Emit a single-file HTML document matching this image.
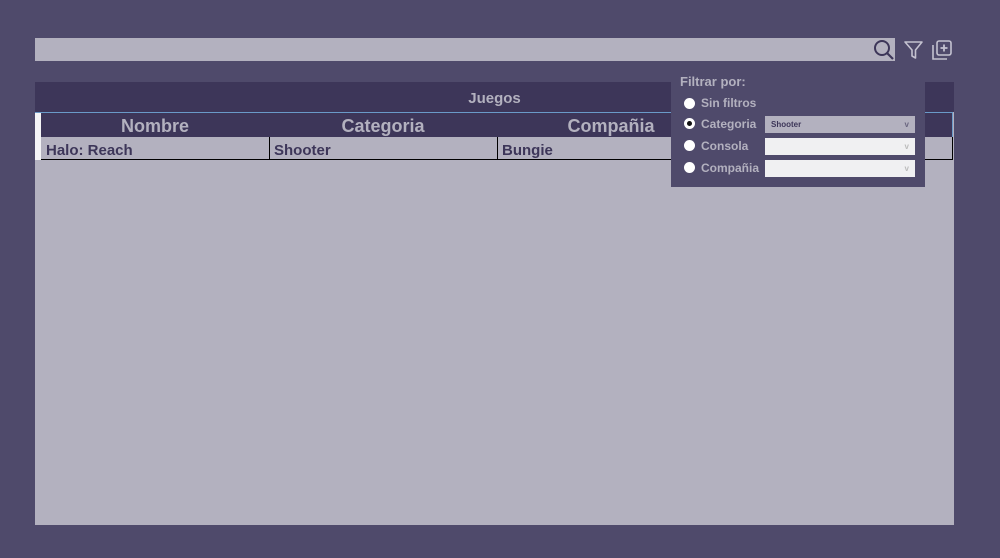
<!DOCTYPE html>
<html><head><meta charset="utf-8"><style>
*{margin:0;padding:0;box-sizing:border-box}
body{width:1000px;height:558px;background:#4f4a6b;position:relative;overflow:hidden;font-family:"Liberation Sans",sans-serif;font-weight:bold}
.abs{position:absolute}
</style></head><body>
<div class="abs" style="left:35px;top:38px;width:860px;height:23px;background:#b3b1bf"></div>
<svg class="abs" style="left:872px;top:39px" width="24" height="22" viewBox="0 0 24 22"><circle cx="10" cy="9" r="7" fill="none" stroke="#3d3659" stroke-width="2"/><line x1="15" y1="14" x2="21" y2="20" stroke="#3d3659" stroke-width="2.2"/></svg>
<svg class="abs" style="left:903px;top:40px" width="22" height="20" viewBox="0 0 22 20"><path d="M2 2 H19 L12.5 10 V18 L9 16 V10 Z" fill="none" stroke="#c4c2d0" stroke-width="1.6" stroke-linejoin="round"/></svg>
<svg class="abs" style="left:931px;top:39px" width="22" height="22" viewBox="0 0 22 22"><rect x="6" y="2" width="14" height="14" rx="2" fill="none" stroke="#c4c2d0" stroke-width="1.6"/><path d="M2 6 V20 H16" fill="none" stroke="#c4c2d0" stroke-width="1.6"/><path d="M13 5.5 V12.5 M9.5 9 H16.5" stroke="#c4c2d0" stroke-width="1.8"/></svg>

<div class="abs" style="left:35px;top:82px;width:919px;height:443px;background:#b3b1bf"></div>
<div class="abs" style="left:35px;top:82px;width:919px;height:30px;background:#3d3659;color:#b3b1bf;font-size:15px;text-align:center;line-height:34px">Juegos</div>
<div class="abs" style="left:35px;top:112px;width:918px;height:1px;background:#6a9ac8"></div>
<div class="abs" style="left:952px;top:112px;width:1px;height:26px;background:#6a9ac8"></div>
<div class="abs" style="left:35px;top:113px;width:917px;height:24px;background:#3d3659"></div>
<div class="abs" style="left:35px;top:113px;width:6px;height:47px;background:#f4f4f6"></div>
<div class="abs" style="left:41px;top:113px;width:228px;height:24px;color:#b3b1bf;font-size:18px;text-align:center;line-height:26px">Nombre</div>
<div class="abs" style="left:269px;top:113px;width:228px;height:24px;color:#b3b1bf;font-size:18px;text-align:center;line-height:26px">Categoria</div>
<div class="abs" style="left:497px;top:113px;width:228px;height:24px;color:#b3b1bf;font-size:18px;text-align:center;line-height:26px">Compañia</div>
<div class="abs" style="left:41px;top:159px;width:912px;height:1px;background:#000"></div>
<div class="abs" style="left:269px;top:137px;width:1px;height:23px;background:#000"></div>
<div class="abs" style="left:497px;top:137px;width:1px;height:23px;background:#000"></div>
<div class="abs" style="left:952px;top:137px;width:1px;height:23px;background:#000"></div>
<div class="abs" style="left:46px;top:139px;color:#3d3659;font-size:15px;line-height:24px">Halo: Reach</div>
<div class="abs" style="left:274px;top:139px;color:#3d3659;font-size:15px;line-height:24px">Shooter</div>
<div class="abs" style="left:502px;top:139px;color:#3d3659;font-size:15px;line-height:24px">Bungie</div>

<div class="abs" style="left:671px;top:70px;width:254px;height:117px;background:#4f4a6b"></div>
<div class="abs" style="left:680px;top:74px;color:#b3b1bf;font-size:13px">Filtrar por:</div>
<div class="abs" style="left:684px;top:98px;width:11px;height:11px;border-radius:50%;background:#fff"></div>
<div class="abs" style="left:701px;top:96px;color:#b3b1bf;font-size:12px">Sin filtros</div>
<div class="abs" style="left:684px;top:118px;width:11px;height:11px;border-radius:50%;background:#fff;border:3px solid #fff"><div style="width:5px;height:5px;border-radius:50%;background:#111"></div></div>
<div class="abs" style="left:701px;top:117px;color:#b3b1bf;font-size:12px">Categoria</div>
<div class="abs" style="left:684px;top:140px;width:11px;height:11px;border-radius:50%;background:#fff"></div>
<div class="abs" style="left:701px;top:139px;color:#b3b1bf;font-size:12px">Consola</div>
<div class="abs" style="left:684px;top:162px;width:11px;height:11px;border-radius:50%;background:#fff"></div>
<div class="abs" style="left:701px;top:161px;color:#b3b1bf;font-size:12px">Compañia</div>
<div class="abs" style="left:765px;top:116px;width:150px;height:17px;background:#b3b1bf;color:#3d3659;font-size:8px;line-height:17px;padding-left:6px">Shooter<span style="position:absolute;right:6px;font-size:8px;color:#6a6680">v</span></div>
<div class="abs" style="left:765px;top:138px;width:150px;height:17px;background:#f0f0f2"><span style="position:absolute;right:6px;font-size:8px;line-height:17px;color:#bbb">v</span></div>
<div class="abs" style="left:765px;top:160px;width:150px;height:17px;background:#f0f0f2"><span style="position:absolute;right:6px;font-size:8px;line-height:17px;color:#bbb">v</span></div>
</body></html>
